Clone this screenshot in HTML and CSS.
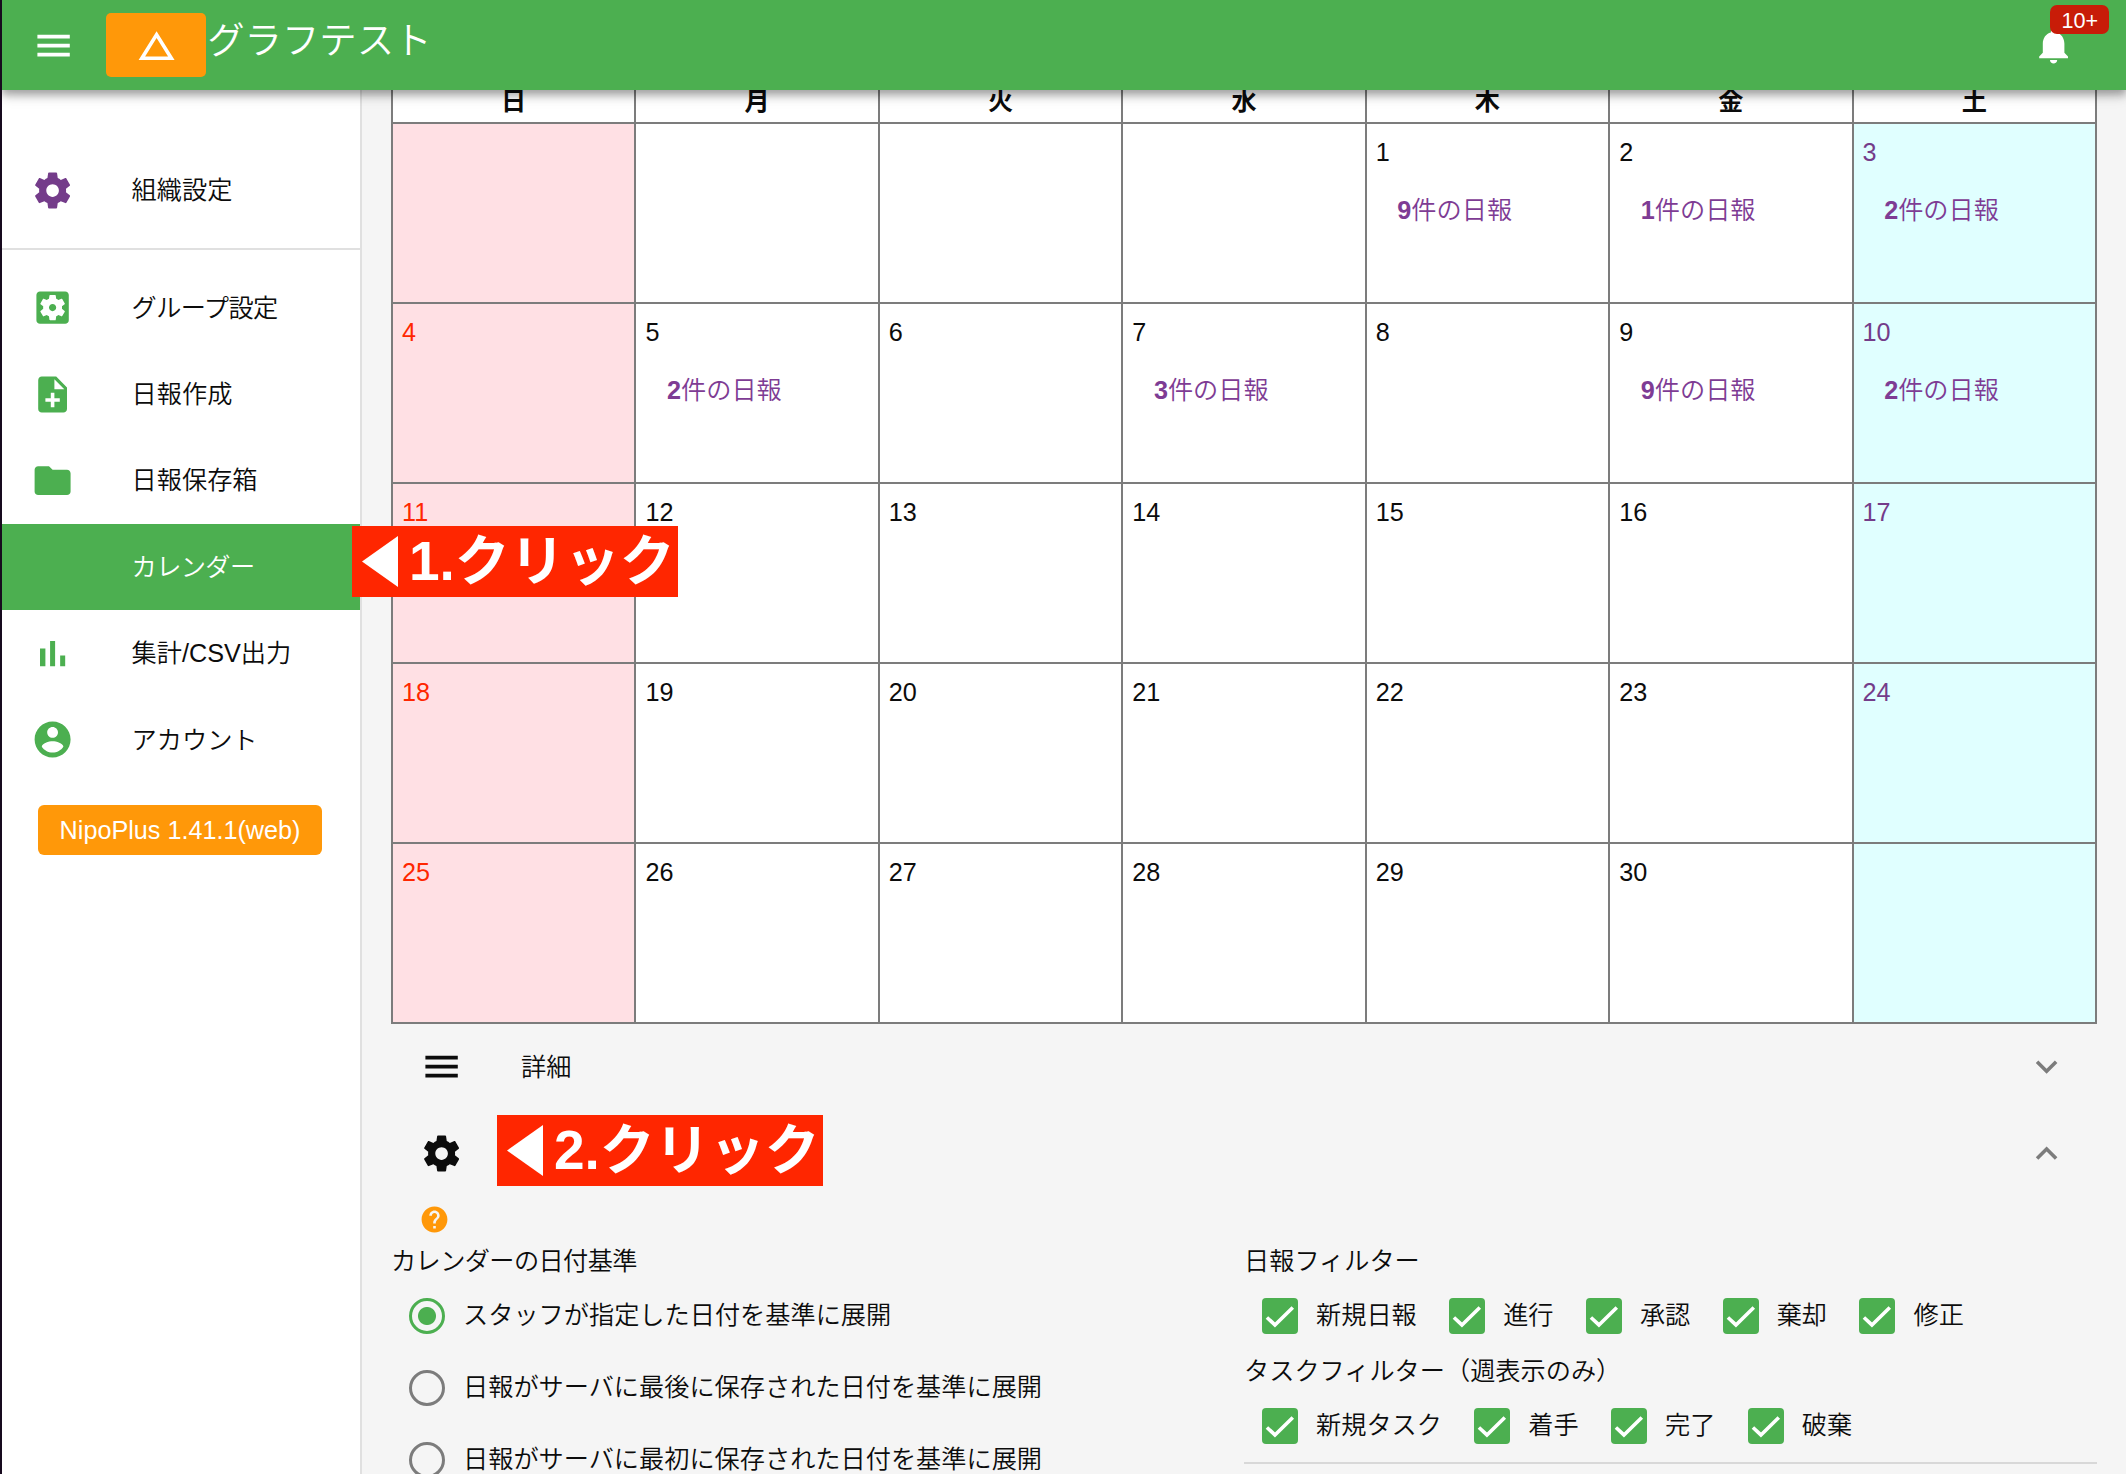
FILE: index.html
```html
<!DOCTYPE html>
<html lang="ja">
<head>
<meta charset="utf-8">
<title>グラフテスト</title>
<link rel="stylesheet" href="styles.css">
</head>
<body>
<svg class="defs" width="0" height="0" aria-hidden="true">
  <symbol id="menu" viewBox="0 0 24 24"><path d="M3 18h18v-2H3v2zm0-5h18v-2H3v2zm0-7v2h18V6H3z"/></symbol>
  <symbol id="gear" viewBox="0 0 24 24"><path d="M19.43 12.98c.04-.32.07-.64.07-.98s-.03-.66-.07-.98l2.11-1.65c.19-.15.24-.42.12-.64l-2-3.46c-.12-.22-.39-.3-.61-.22l-2.49 1c-.52-.4-1.08-.73-1.69-.98l-.38-2.65C14.46 2.18 14.25 2 14 2h-4c-.25 0-.46.18-.49.42l-.38 2.65c-.61.25-1.17.59-1.69.98l-2.49-1c-.23-.09-.49 0-.61.22l-2 3.46c-.13.22-.07.49.12.64l2.11 1.65c-.04.32-.07.65-.07.98s.03.66.07.98l-2.11 1.65c-.19.15-.24.42-.12.64l2 3.46c.12.22.39.3.61.22l2.49-1c.52.4 1.08.73 1.69.98l.38 2.65c.03.24.24.42.49.42h4c.25 0 .46-.18.49-.42l.38-2.65c.61-.25 1.17-.59 1.69-.98l2.49 1c.23.09.49 0 .61-.22l2-3.46c.12-.22.07-.49-.12-.64l-2.11-1.65zM12 15.5c-1.93 0-3.5-1.57-3.5-3.5s1.57-3.5 3.5-3.5 3.5 1.57 3.5 3.5-1.57 3.5-3.5 3.5z"/></symbol>
  <symbol id="gearbox" viewBox="0 0 24 24"><path d="M12 10c-1.1 0-2 .9-2 2s.9 2 2 2 2-.9 2-2-.9-2-2-2zm7-7H5c-1.11 0-2 .9-2 2v14c0 1.1.89 2 2 2h14c1.11 0 2-.9 2-2V5c0-1.1-.89-2-2-2zm-1.75 9c0 .23-.02.46-.05.68l1.48 1.16c.13.11.17.3.08.45l-1.4 2.42c-.09.15-.27.21-.43.15l-1.74-.7c-.36.28-.76.51-1.18.69l-.26 1.85c-.03.17-.18.3-.35.3h-2.8c-.17 0-.32-.13-.35-.29l-.26-1.85c-.43-.18-.82-.41-1.18-.69l-1.74.7c-.16.06-.34 0-.43-.15l-1.4-2.42c-.09-.15-.05-.34.08-.45l1.48-1.16c-.03-.23-.05-.46-.05-.69 0-.23.02-.46.05-.68l-1.48-1.16c-.13-.11-.17-.3-.08-.45l1.4-2.42c.09-.15.27-.21.43-.15l1.74.7c.36-.28.76-.51 1.18-.69l.26-1.85c.03-.17.18-.3.35-.3h2.8c.17 0 .32.13.35.29l.26 1.85c.43.18.82.41 1.18.69l1.74-.7c.16-.06.34 0 .43.15l1.4 2.42c.09.15.05.34-.08.45l-1.48 1.16c.03.23.05.46.05.69z"/></symbol>
  <symbol id="note" viewBox="0 0 24 24"><path d="M14 2H6c-1.1 0-1.99.9-1.99 2L4 20c0 1.1.89 2 1.99 2H18c1.1 0 2-.9 2-2V8l-6-6zm2 14h-3v3h-2v-3H8v-2h3v-3h2v3h3v2zm-3-7V3.5L18.5 9H13z"/></symbol>
  <symbol id="folder" viewBox="0 0 24 24"><path d="M10 4H4c-1.1 0-1.99.9-1.99 2L2 18c0 1.1.9 2 2 2h16c1.1 0 2-.9 2-2V8c0-1.1-.9-2-2-2h-8l-2-2z"/></symbol>
  <symbol id="bars" viewBox="0 0 24 24"><path d="M5 9.200h3V19H5zM10.600 5h2.800v14h-2.800zM16.200 13H19v6h-2.800z"/></symbol>
  <symbol id="user" viewBox="0 0 24 24"><path d="M12 2C6.48 2 2 6.48 2 12s4.48 10 10 10 10-4.48 10-10S17.52 2 12 2zm0 3c1.66 0 3 1.34 3 3s-1.34 3-3 3-3-1.34-3-3 1.34-3 3-3zm0 14.2c-2.5 0-4.71-1.28-6-3.22.03-1.99 4-3.08 6-3.08 1.99 0 5.97 1.09 6 3.08-1.29 1.94-3.5 3.22-6 3.22z"/></symbol>
  <symbol id="bell" viewBox="0 0 24 24"><path d="M12 22c1.1 0 2-.9 2-2h-4c0 1.1.89 2 2 2zm6-6v-5c0-3.07-1.64-5.64-4.5-6.32V4c0-.83-.67-1.5-1.5-1.5s-1.500.67-1.500 1.500v.68C7.630 5.360 6 7.920 6 11v5l-2 2v1h16v-1l-2-2z"/></symbol>
  <symbol id="triangle" viewBox="0 0 24 24"><path d="M12 7.770L18.390 18H5.610L12 7.770M12 4L2 20h20L12 4z"/></symbol>
  <symbol id="down" viewBox="0 0 24 24"><path d="M7.410 8.590L12 13.170l4.590-4.580L18 10l-6 6-6-6 1.410-1.410z"/></symbol>
  <symbol id="up" viewBox="0 0 24 24"><path d="M7.410 15.410L12 10.830l4.590 4.580L18 14l-6-6-6 6z"/></symbol>
  <symbol id="help" viewBox="0 0 24 24"><path d="M12 2C6.480 2 2 6.480 2 12s4.480 10 10 10 10-4.480 10-10S17.520 2 12 2zm1 17h-2v-2h2v2zm2.070-7.750l-.9.920C13.450 12.900 13 13.500 13 15h-2v-.5c0-1.100.45-2.100 1.170-2.830l1.240-1.260c.37-.36.59-.86.59-1.410 0-1.100-.9-2-2-2s-2 .9-2 2H8c0-2.210 1.790-4 4-4s4 1.790 4 4c0 .88-.36 1.680-.93 2.250z"/></symbol>
  <symbol id="check" viewBox="0 0 24 24"><path d="M2.200 13.100L8.200 18.700 21.600 5.600" fill="none" stroke="#fff" stroke-width="2.700"/></symbol>
  <symbol id="pointer" viewBox="0 0 36 51"><path d="M0 25.500L36 0v51z"/></symbol>
</svg>

<header class="header">
  <svg class="icon header-menu"><use href="#menu"/></svg>
  <div class="logo"><svg class="icon"><use href="#triangle"/></svg></div>
  <h1 class="title">グラフテスト</h1>
  <div class="notify"><svg class="icon"><use href="#bell"/></svg><span class="badge">10+</span></div>
</header>

<div class="layout">
  <nav class="sidebar">
    <a class="nav-item org"><svg class="icon"><use href="#gear"/></svg><span>組織設定</span></a>
    <div class="nav-line"></div>
    <a class="nav-item"><svg class="icon"><use href="#gearbox"/></svg><span class="tight">グループ設定</span></a>
    <a class="nav-item"><svg class="icon"><use href="#note"/></svg><span>日報作成</span></a>
    <a class="nav-item"><svg class="icon"><use href="#folder"/></svg><span>日報保存箱</span></a>
    <a class="nav-item active"><svg class="icon"></svg><span class="tight">カレンダー</span>
      <span class="callout callout-first"><svg class="pointer"><use href="#pointer"/></svg>1.クリック</span></a>
    <a class="nav-item"><svg class="icon"><use href="#bars"/></svg><span>集計/CSV出力</span></a>
    <a class="nav-item"><svg class="icon"><use href="#user"/></svg><span>アカウント</span></a>
    <div class="version">NipoPlus 1.41.1(web)</div>
  </nav>

  <main class="main">
    <section class="calendar">
      <div class="weekday">日</div><div class="weekday">月</div><div class="weekday">火</div><div class="weekday">水</div><div class="weekday">木</div><div class="weekday">金</div><div class="weekday">土</div>

      <div class="day sun"></div><div class="day"></div><div class="day"></div><div class="day"></div>
      <div class="day">1<p class="report"><b>9</b>件の日報</p></div>
      <div class="day">2<p class="report"><b>1</b>件の日報</p></div>
      <div class="day sat">3<p class="report"><b>2</b>件の日報</p></div>

      <div class="day sun">4</div>
      <div class="day">5<p class="report"><b>2</b>件の日報</p></div>
      <div class="day">6</div>
      <div class="day">7<p class="report"><b>3</b>件の日報</p></div>
      <div class="day">8</div>
      <div class="day">9<p class="report"><b>9</b>件の日報</p></div>
      <div class="day sat">10<p class="report"><b>2</b>件の日報</p></div>

      <div class="day sun">11</div><div class="day">12</div><div class="day">13</div><div class="day">14</div><div class="day">15</div><div class="day">16</div><div class="day sat">17</div>
      <div class="day sun">18</div><div class="day">19</div><div class="day">20</div><div class="day">21</div><div class="day">22</div><div class="day">23</div><div class="day sat">24</div>
      <div class="day sun">25</div><div class="day">26</div><div class="day">27</div><div class="day">28</div><div class="day">29</div><div class="day">30</div><div class="day sat"></div>
    </section>

    <div class="panel-head"><svg class="icon"><use href="#menu"/></svg><span class="panel-title">詳細</span><svg class="icon chevron"><use href="#down"/></svg></div>
    <div class="panel-head open"><svg class="icon"><use href="#gear"/></svg><span class="callout callout-second"><svg class="pointer"><use href="#pointer"/></svg>2.クリック</span><svg class="icon chevron"><use href="#up"/></svg></div>

    <svg class="help"><use href="#help"/></svg>

    <div class="settings">
      <div class="column">
        <div class="label tight">カレンダーの日付基準</div>
        <div class="option"><i class="radio on"></i>スタッフが指定した日付を基準に展開</div>
        <div class="option"><i class="radio"></i>日報がサーバに最後に保存された日付を基準に展開</div>
        <div class="option"><i class="radio"></i>日報がサーバに最初に保存された日付を基準に展開</div>
      </div>
      <div class="column">
        <div class="label">日報フィルター</div>
        <div class="checks">
          <div class="option"><svg class="box"><use href="#check"/></svg>新規日報</div>
          <div class="option"><svg class="box"><use href="#check"/></svg>進行</div>
          <div class="option"><svg class="box"><use href="#check"/></svg>承認</div>
          <div class="option"><svg class="box"><use href="#check"/></svg>棄却</div>
          <div class="option"><svg class="box"><use href="#check"/></svg>修正</div>
        </div>
        <div class="label">タスクフィルター（週表示のみ）</div>
        <div class="checks">
          <div class="option"><svg class="box"><use href="#check"/></svg>新規タスク</div>
          <div class="option"><svg class="box"><use href="#check"/></svg>着手</div>
          <div class="option"><svg class="box"><use href="#check"/></svg>完了</div>
          <div class="option"><svg class="box"><use href="#check"/></svg>破棄</div>
        </div>
        <div class="rule"></div>
      </div>
    </div>
  </main>
</div>
</body>
</html>
```
FILE: styles.css
```css
* {
  box-sizing: border-box;
}

body {
  margin: 0;
  width: 2126px;
  height: 1474px;
  overflow: hidden;
  border-left: 2px solid #170a1e;
  background: #f5f5f5;
  color: #0c0c0c;
  font: 350 25.2px/37.8px "Liberation Sans", "Noto Sans CJK JP", sans-serif;
}

.defs {
  position: absolute;
}

.icon {
  flex: none;
  width: 43.2px;
  height: 43.2px;
  fill: currentColor;
}

.tight {
  letter-spacing: -.6px;
}

/* Header */
.header {
  position: relative;
  z-index: 2;
  display: flex;
  height: 90px;
  padding: 0 50.4px 0 30px;
  background: #4caf50;
  color: #fff;
  box-shadow: 0 4px 7px rgba(0, 0, 0, .2), 0 7px 9px rgba(0, 0, 0, .14), 0 2px 18px rgba(0, 0, 0, .12);
}

.header-menu {
  margin-top: 24px;
}

.logo {
  display: flex;
  align-items: center;
  justify-content: center;
  width: 100px;
  height: 64px;
  margin: 13px 0 0 31px;
  padding-top: 1px;
  border-radius: 5px;
  background: #ff9809;
}

.title {
  margin: 0;
  padding: 12px 0 0 1px;
  font-size: 37.4px;
  font-weight: 350;
  line-height: 58px;
}

.notify {
  position: relative;
  margin: 24px 0 0 auto;
  height: 43px;
}

.badge {
  position: absolute;
  left: 18px;
  top: -19px;
  width: 59px;
  height: 29px;
  border-radius: 7px;
  background: #c81c08;
  font-size: 21.6px;
  line-height: 31px;
  text-align: center;
}

.layout {
  display: flex;
  height: 1384px;
}

/* Sidebar */
.sidebar {
  flex: none;
  width: 360px;
  padding-top: 57.600px;
  border-right: 2px solid #e0e0e0;
  background: #fff;
}

.nav-item {
  position: relative;
  display: flex;
  align-items: center;
  gap: 57.600px;
  height: 86.400px;
  padding-left: 28.800px;
}

.nav-item > span:not(.callout) {
  padding-top: 1px;
}

.nav-item .icon {
  color: #4caf50;
}

.nav-item.org .icon {
  color: #743c8a;
}

.nav-item.active {
  background: #4caf50;
  color: #fff;
}

.nav-line {
  height: 2px;
  margin: 14.400px 0;
  background: #e0e0e0;
}

.version {
  width: 284px;
  height: 50px;
  margin: 22px 0 0 36px;
  border-radius: 6px;
  background: #ff9809;
  color: #fff;
  line-height: 51px;
  text-align: center;
}

/* Click markers laid over the page */
.callout {
  display: flex;
  align-items: center;
  width: 326px;
  height: 71px;
  padding-left: 10px;
  background: #ff2600;
  color: #fff;
  font-size: 55px;
  font-weight: 700;
  line-height: 71px;
  white-space: nowrap;
}

.callout-first {
  position: absolute;
  z-index: 1;
  left: 350px;
  top: 2px;
}

.callout-second {
  margin: -7px 0 0 34px;
}

.pointer {
  width: 36px;
  height: 51px;
  margin-right: 11px;
  fill: #fff;
}

/* Calendar */
.main {
  flex: none;
  width: 1735px;
  padding-left: 29px;
}

.calendar {
  display: grid;
  grid-template-columns: repeat(7, 1fr);
  grid-template-rows: 32px repeat(5, 178px);
  gap: 2px;
  width: 1706px;
  padding: 0 2px 2px;
  background: #7c7c7c;
}

.weekday {
  background: #fff;
  font-weight: 700;
  line-height: 22px;
  text-align: center;
}

.day {
  padding: 10px 9px;
  background: #fff;
}

.day.sun {
  background: #ffe0e4;
  color: #ff2600;
}

.day.sat {
  background: #e0ffff;
  color: #743c8a;
}

.report {
  margin: 20px 0 0 21.6px;
  color: #7e3c94;
}

.report b {
  font-weight: 700;
}

/* Expansion panels */
.panel-head {
  display: flex;
  align-items: center;
  width: 1706px;
  height: 86.400px;
  padding: 0 28.800px 1px 28.800px;
}

.panel-head.open {
  padding-bottom: 0;
}

.panel-title {
  margin-left: 58px;
  padding-top: 2px;
}

.chevron {
  margin-left: auto;
  color: #7c7c7c;
}

.help {
  display: block;
  width: 31px;
  height: 31px;
  margin: 7px 0 7.300px 28px;
  fill: #ff9809;
}

/* Settings */
.settings {
  display: grid;
  grid-template-columns: 853px 853px;
}

.label {
  height: 37.800px;
  line-height: 39px;
}

.option {
  display: flex;
  align-items: center;
  height: 72px;
  white-space: nowrap;
}

.radio {
  width: 36px;
  height: 36px;
  margin: 0 18px;
  border: 3.600px solid #7c7c7c;
  border-radius: 50%;
}

.radio.on {
  border-color: #4caf50;
  background: radial-gradient(circle, #4caf50 8.500px, transparent 9.500px);
}

.checks {
  display: flex;
  gap: 14.400px;
}

.box {
  width: 36px;
  height: 36px;
  margin: 0 18px;
  padding: 2px;
  border-radius: 4px;
  background: #4caf50;
}

.rule {
  height: 2px;
  background: #d8d8d8;
}
```
